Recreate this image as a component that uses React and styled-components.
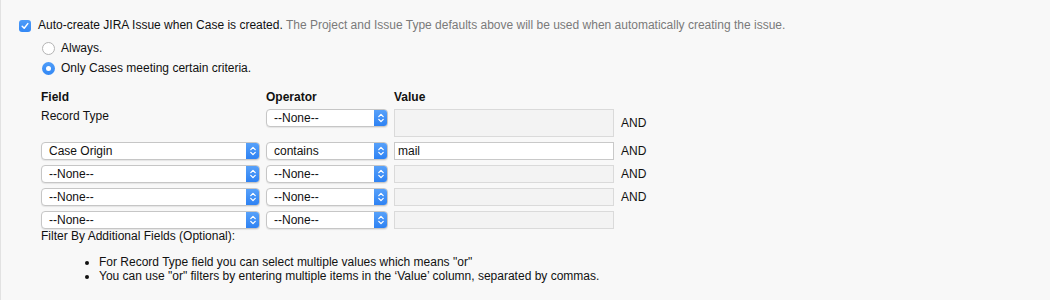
import React from "react";
import styled, { createGlobalStyle } from "styled-components";

const GlobalStyle = createGlobalStyle`
  html, body {
    margin: 0;
    padding: 0;
    background: #f8f8f8;
  }
  body {
    font-family: "Liberation Sans", Arial, sans-serif;
    font-size: 12px;
    color: #111;
  }
`;

const Page = styled.div`
  width: 1050px;
  height: 300px;
  box-sizing: border-box;
  border-left: 1px solid #e2e2e2;
  padding: 17px 0 0 18px;
  display: flex;
  flex-direction: column;
`;

const CheckRow = styled.label`
  display: flex;
  align-items: center;
  gap: 7px;
  height: 16px;
  line-height: 16px;
`;

const Muted = styled.span`
  color: #7a7a7a;
`;

const CheckBox = styled.span`
  width: 12px;
  height: 12px;
  margin-top: 2px;
  border-radius: 3px;
  background: linear-gradient(#4e9cf8, #3388f5);
  display: flex;
  align-items: center;
  justify-content: center;
  flex-shrink: 0;
`;

const RadioGroup = styled.div`
  display: flex;
  flex-direction: column;
  gap: 6px;
  margin: 8px 0 0 23px;
`;

const RadioRow = styled.label`
  display: flex;
  align-items: center;
  gap: 6px;
  height: 14px;
`;

const RadioDot = styled.span`
  width: 13px;
  height: 13px;
  box-sizing: border-box;
  border-radius: 50%;
  flex-shrink: 0;
  border: ${(p) => (p.on ? "none" : "1px solid #b4b4b4")};
  background: ${(p) => (p.on ? "linear-gradient(#4e9cf8, #3388f5)" : "#fff")};
  display: flex;
  align-items: center;
  justify-content: center;
  &::after {
    content: "";
    display: ${(p) => (p.on ? "block" : "none")};
    width: 5px;
    height: 5px;
    border-radius: 50%;
    background: #fff;
  }
`;

const Grid = styled.div`
  display: grid;
  grid-template-columns: 219px 122px 220px auto;
  column-gap: 6px;
  row-gap: 5px;
  margin: 15px 0 0 22px;
  align-items: center;
`;

const Head = styled.div`
  font-weight: bold;
  line-height: 14px;
`;

const FieldLabel = styled.div`
  align-self: start;
  line-height: 14px;
`;

const SelectBox = styled.div`
  position: relative;
  height: 18px;
  box-sizing: border-box;
  border: 1px solid #c6c6c6;
  border-radius: 4px;
  background: #fff;
  box-shadow: 0 1px 1px rgba(0, 0, 0, 0.08);
  display: flex;
  align-items: center;
  padding-left: 7px;
  overflow: hidden;
  align-self: ${(p) => (p.top ? "start" : "center")};
`;

const Stepper = styled.span`
  position: absolute;
  top: -1px;
  right: -1px;
  bottom: -1px;
  width: 14px;
  border-radius: 0 4px 4px 0;
  background: linear-gradient(#5aa3fa, #2b80f3);
  display: flex;
  align-items: center;
  justify-content: center;
`;

const ValueBox = styled.div`
  height: ${(p) => p.h || 18}px;
  box-sizing: border-box;
  border: 1px solid ${(p) => (p.active ? "#c9c9c9" : "#dadada")};
  background: ${(p) => (p.active ? "#fff" : "#f3f3f3")};
  padding-left: 3px;
  line-height: 16px;
`;

const And = styled.div`
  padding-left: 1px;
`;

const Filter = styled.div`
  margin: 0 0 0 22px;
  line-height: 14px;
`;

const Notes = styled.ul`
  margin: 12px 0 0 0;
  padding-left: 80px;
  line-height: 14.3px;
`;

const Check = () => (
  <svg width="8" height="8" viewBox="0 0 8 8">
    <path d="M1.2 4.2 L3.2 6.2 L6.8 1.6" fill="none" stroke="#fff" strokeWidth="1.5" strokeLinecap="round" strokeLinejoin="round" />
  </svg>
);

const Arrows = () => (
  <svg width="8" height="12" viewBox="0 0 8 12">
    <path d="M1.8 4.6 L4 2.4 L6.2 4.6 M1.8 7.4 L4 9.6 L6.2 7.4" fill="none" stroke="#fff" strokeWidth="1.3" strokeLinecap="round" strokeLinejoin="round" />
  </svg>
);

const Select = ({ children, top }) => (
  <SelectBox top={top}>
    {children}
    <Stepper>
      <Arrows />
    </Stepper>
  </SelectBox>
);

const rows = [
  { field: "Case Origin", op: "contains", value: "mail", and: true },
  { field: "--None--", op: "--None--", and: true },
  { field: "--None--", op: "--None--", and: true },
  { field: "--None--", op: "--None--", and: false },
];

export default function App() {
  return (
    <>
      <GlobalStyle />
      <Page>
        <CheckRow>
          <CheckBox>
            <Check />
          </CheckBox>
          <span>
            Auto-create JIRA Issue when Case is created.{" "}
            <Muted>
              The Project and Issue Type defaults above will be used when automatically creating the issue.
            </Muted>
          </span>
        </CheckRow>
        <RadioGroup>
          <RadioRow>
            <RadioDot />
            Always.
          </RadioRow>
          <RadioRow>
            <RadioDot on />
            Only Cases meeting certain criteria.
          </RadioRow>
        </RadioGroup>
        <Grid>
          <Head>Field</Head>
          <Head>Operator</Head>
          <Head>Value</Head>
          <div />
          <FieldLabel>Record Type</FieldLabel>
          <Select top>--None--</Select>
          <ValueBox h={28} />
          <And>AND</And>
          {rows.map((r, i) => (
            <React.Fragment key={i}>
              <Select>{r.field}</Select>
              <Select>{r.op}</Select>
              <ValueBox active={!!r.value}>{r.value}</ValueBox>
              <And>{r.and ? "AND" : ""}</And>
            </React.Fragment>
          ))}
        </Grid>
        <Filter>Filter By Additional Fields (Optional):</Filter>
        <Notes>
          <li>For Record Type field you can select multiple values which means "or"</li>
          <li>You can use "or" filters by entering multiple items in the ‘Value’ column, separated by commas.</li>
        </Notes>
      </Page>
    </>
  );
}
